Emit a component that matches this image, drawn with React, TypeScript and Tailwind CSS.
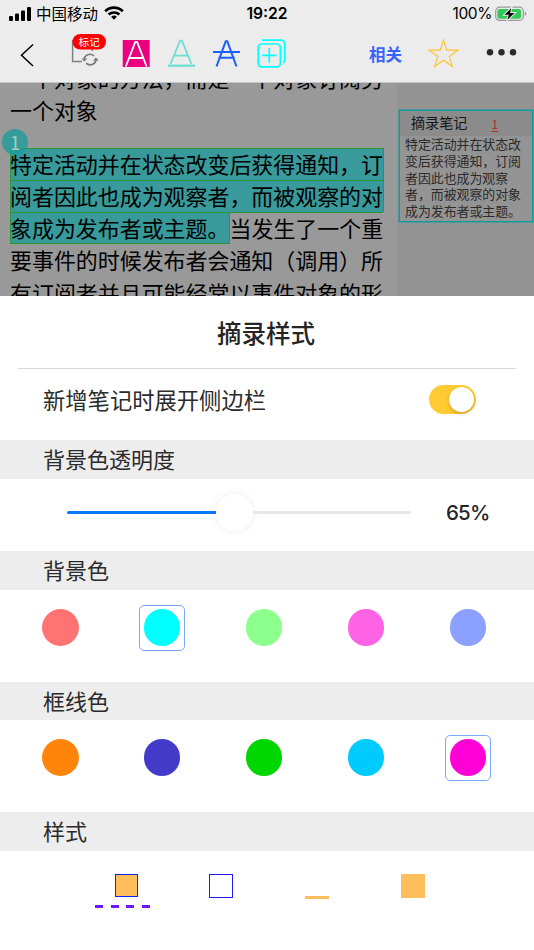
import React from "react";

const cjk = "font-['Noto_Sans_CJK_SC',sans-serif]";
const latin = "font-['Inter',sans-serif]";

function StatusBar() {
  return (
    <div className="flex h-7 items-center justify-between pl-[9px] pr-[7px] text-black">
      <div className="flex h-7 w-[180px] items-center">
        <svg width="22" height="14" viewBox="0 0 22 14" className="-mt-px shrink-0">
          <rect x="0" y="9" width="4" height="5" rx="1" />
          <rect x="6" y="6.5" width="4" height="7.5" rx="1" />
          <rect x="12" y="3.5" width="4" height="10.5" rx="1" />
          <rect x="18" y="0" width="4" height="14" rx="1" />
        </svg>
        <span className="-mt-[3px] ml-[5px] text-[15.5px] leading-6">中国移动</span>
        <svg width="20" height="14" viewBox="0 0 20 14" className="-mt-[2px] ml-[6px] shrink-0" fill="none" stroke="#000" strokeWidth="2.7">
          <path d="M1.2 5.2a12.8 12.8 0 0 1 17.6 0" />
          <path d="M4.6 8.6a8 8 0 0 1 10.8 0" />
          <path d="M10 13.8l-2.9-3a4.4 4.4 0 0 1 5.8 0z" fill="#000" stroke="none" />
        </svg>
      </div>
      <span className={`${latin} -ml-[2px] text-[15.7px] font-semibold`}>19:22</span>
      <div className="flex w-[180px] items-center justify-end">
        <span className={`${latin} text-[15.5px] tracking-[-0.4px]`}>100%</span>
        <svg width="32" height="16" viewBox="0 0 32 16" className="-mt-px ml-[3px]">
          <rect x="0.7" y="1.2" width="27.6" height="13.2" rx="4" fill="none" stroke="#999" strokeWidth="1.2" />
          <rect x="2.4" y="2.9" width="23.7" height="9.8" rx="2.3" fill="#34c759" />
          <path d="M29.8 5.6c2 .9 2 3.5 0 4.4z" fill="#999" />
          <path d="M16.2 2.2L9.6 8.8h4.2l-1.3 5 7-6.9h-4.4z" fill="#000" stroke="#ececec" strokeWidth="2" paintOrder="stroke" />
        </svg>
      </div>
    </div>
  );
}

function Toolbar() {
  return (
    <div className="flex h-[54px] items-start">
      <svg width="534" height="54" viewBox="0 28 534 54" fill="none" className={cjk}>
        <path d="M33 44.5L21.5 55.2 33 66" stroke="#000" strokeWidth="1.5" />
        <path d="M72.6 40v21.6H82M92.3 48v3" stroke="#808080" strokeWidth="1.5" />
        <g stroke="#777" strokeWidth="1.6">
          <path d="M84.2 60.5a5.8 5.8 0 0 1 9.8-4.6M96 58.5a5.8 5.8 0 0 1-9.8 4.7" />
          <path d="M84.2 60.5v-1.7M96 58.4v1.7" />
          <path d="M82.4 58.4l2 2.2 2.2-2.2M93.7 60.7l2.2-2.2 2 2.2" strokeWidth="1.2" />
        </g>
        <rect x="72.5" y="34" width="33.5" height="15.5" rx="7.75" fill="#f00" />
        <text x="89.2" y="45.6" textAnchor="middle" fontSize="10.6" fill="#fff">标记</text>
        <rect x="122.7" y="40" width="27" height="27" fill="#ec0080" />
        <path d="M125.8 66.5L135.3 42h1.8l9.5 24.5M129.2 58h14" stroke="#fff" strokeWidth="1.8" />
        <path d="M170.5 64l9.6-23.3h1.8l9.6 23.3M174 55.6h14" stroke="#66dfd0" strokeWidth="1.7" />
        <path d="M168 65.7h27" stroke="#66dfd0" strokeWidth="2.2" />
        <path d="M216.5 66.5l9.2-25.2h1.6l9.2 25.2M213 51.9h27M218.6 57.7h16" stroke="#1a60ff" strokeWidth="2" />
        <g stroke="#0ff" strokeWidth="1.7">
          <rect x="258.2" y="44" width="22.2" height="22.8" rx="3.5" />
          <path d="M262 40.1h19.2a3.6 3.6 0 0 1 3.6 3.6v16.1q0 2.2-1.5 3M269.3 48v14.5M262 55.3h14.5" />
        </g>
        <text x="369" y="61" fontSize="16.5" fontWeight="700" fill="#3763ff">相关</text>
        <path d="M443.5 40.2l3.4 10h11l-8.7 6.4 3.2 9.8-8.9-6.1-8.9 6.1 3.2-9.8-8.7-6.4h11z" stroke="#ffc42d" strokeWidth="1.2" />
        <circle cx="490" cy="52.3" r="3.2" fill="#2b2b2b" />
        <circle cx="501.5" cy="52.3" r="3.2" fill="#2b2b2b" />
        <circle cx="513" cy="52.3" r="3.2" fill="#2b2b2b" />
      </svg>
    </div>
  );
}

const band = "h-[32.3px] border-[#2f9638] border-t bg-[#389a9a] leading-[30.3px]";

function Reader() {
  return (
    <div className="relative flex h-[213px] overflow-hidden bg-[#999] text-black">
      <div className="w-[397px] shrink-0 pl-[10px] text-[21.94px] leading-[32.3px] whitespace-nowrap">
        <div className="-mt-[21px]">一个对象的方法，而是一个对象订阅另</div>
        <div>一个对象</div>
        <div className="mt-[21px] w-[373.5px]">
          <div className={`${band} border-r shadow-[inset_1px_0_0_#2f9638]`}>特定活动并在状态改变后获得通知，订</div>
          <div className={`${band} border-r shadow-[inset_1px_0_0_#2f9638]`}>阅者因此也成为观察者，而被观察的对</div>
          <div className="flex">
            <div className={`${band} w-[219.5px] shrink-0 shadow-[inset_1px_0_0_#2f9638,inset_-1px_-1px_0_#2f9638]`}>象成为发布者或主题。</div>
            <div className="h-[32.3px] border-t border-[#2f9638] leading-[30.3px]">当发生了一个重</div>
          </div>
        </div>
        <div>要事件的时候发布者会通知（调用）所</div>
        <div>有订阅者并且可能经常以事件对象的形</div>
      </div>
      <div className="flex-1 bg-[#949494] pl-[2px] pt-[27px]">
        <div className="h-[112px] w-[134px] border border-[#0f9c9c] shadow-[0_0_0_0.5px_#0f9c9c]">
          <div className="flex h-[25px] items-center bg-[#8b8b8b] pl-[11px] text-[14.1px] text-[#161616]">
            <span className="-mt-[2px]">摘录笔记</span>
            <span className="ml-[24px] text-[12px] text-[#c02a2a] underline underline-offset-2">1</span>
          </div>
          <p className="pl-[5px] text-[12.9px] leading-[16.8px] whitespace-nowrap text-[#2b2b2b]">
            特定活动并在状态改<br />变后获得通知，订阅<br />者因此也成为观察<br />者，而被观察的对象<br />成为发布者或主题。
          </p>
        </div>
      </div>
      <div className="absolute left-[2px] top-[46px] flex size-[26px] items-center justify-center rounded-full bg-[#159c9c]/75 pb-[2px] text-[19px] leading-none text-[#a3c9c9]">
        1
      </div>
    </div>
  );
}

function SectionTitle({ children, className }: { children: React.ReactNode; className: string }) {
  return (
    <div className={`flex items-center bg-[#ededed] pb-[3px] pl-[43px] text-[22px] leading-none text-[#2b2b2b] ${className}`}>
      {children}
    </div>
  );
}

function Swatches({ colors, selected }: { colors: string[]; selected: number }) {
  return (
    <div className="flex justify-between pl-[37.5px] pr-[43.5px] pt-[15px]">
      {colors.map((c, i) => (
        <div
          key={c}
          className={`flex h-[46px] w-[45.5px] items-center justify-center rounded-[5px] border ${i === selected ? "border-[#79a9ff]" : "border-transparent"}`}
        >
          <div className={`-mt-px size-[36.5px] shrink-0 rounded-full ${c}`} />
        </div>
      ))}
    </div>
  );
}

export default function App() {
  return (
    <div className={`h-[950px] w-[534px] overflow-hidden bg-white ${cjk}`}>
      <header className="h-[83px] border-b border-[#c5c5c5] bg-[#ececec]">
        <StatusBar />
        <Toolbar />
      </header>
      <Reader />
      <section>
        <div className="mx-[18px] flex h-[73px] items-center justify-center border-b border-[#d9d9d9] pr-[2px] pt-[3px] text-[24.5px] font-medium text-[#252525]">
          摘录样式
        </div>
        <div className="flex h-[71px] items-start justify-between pl-[43px] pr-[58.5px] pt-[14px]">
          <span className="text-[22.3px] leading-8 text-[#2b2b2b]">新增笔记时展开侧边栏</span>
          <div className="mt-[2px] flex h-[29px] w-[46.5px] items-center justify-end rounded-full bg-[#ffca32] pr-[2px]">
            <div className="size-[25px] rounded-full bg-white shadow-[0_2px_4px_rgba(0,0,0,0.18)]" />
          </div>
        </div>
        <SectionTitle className="h-[39px]">背景色透明度</SectionTitle>
        <div className="flex h-[72px] items-center pl-[67px]">
          <div className="-mt-[5px] flex w-[344px] items-center">
            <div className="h-[3px] w-[149px] rounded-l bg-[#0878ff]" />
            <div className="size-[37px] shrink-0 rounded-full bg-white shadow-[0_0_10px_rgba(0,0,0,0.08)]" />
            <div className="h-[3px] flex-1 rounded-r bg-[#e7e7e7]" />
          </div>
          <span className={`${latin} -mt-[4px] ml-[35px] text-[20.5px] font-medium tracking-[-0.8px] text-[#252525]`}>65%</span>
        </div>
        <SectionTitle className="h-[39px]">背景色</SectionTitle>
        <div className="h-[92px]">
          <Swatches
            selected={1}
            colors={["bg-[#ff7373]", "bg-[#00ffff]", "bg-[#8cff8c]", "bg-[#ff63e5]", "bg-[#8ca0ff]"]}
          />
        </div>
        <SectionTitle className="h-[38px]">框线色</SectionTitle>
        <div className="h-[92px]">
          <Swatches
            selected={4}
            colors={["bg-[#ff840a]", "bg-[#443bcb]", "bg-[#00d600]", "bg-[#00cbff]", "bg-[#ff00d6]"]}
          />
        </div>
        <SectionTitle className="h-[39px]">样式</SectionTitle>
        <div className="flex items-start pl-[95px] pt-[23px]">
          <div className="flex w-[114px] flex-col pl-[20px]">
            <div className="size-[23px] border-[1.5px] border-[#0b24f5] bg-[#ffbd5c]" />
            <div className="-ml-[20px] mt-[8px] flex gap-[7.7px]">
              {[0, 1, 2, 3].map((n) => (
                <div key={n} className="h-[2.5px] w-[8px] bg-[#6a17ff]" />
              ))}
            </div>
          </div>
          <div className="h-6 w-6 border-[1.5px] border-[#2118ff]" />
          <div className="ml-[72px] mt-[22px] h-[2.5px] w-[24px] bg-[#ffbd5c]" />
          <div className="ml-[72px] h-[23.5px] w-[23.5px] bg-[#ffbd5c]" />
        </div>
      </section>
    </div>
  );
}
